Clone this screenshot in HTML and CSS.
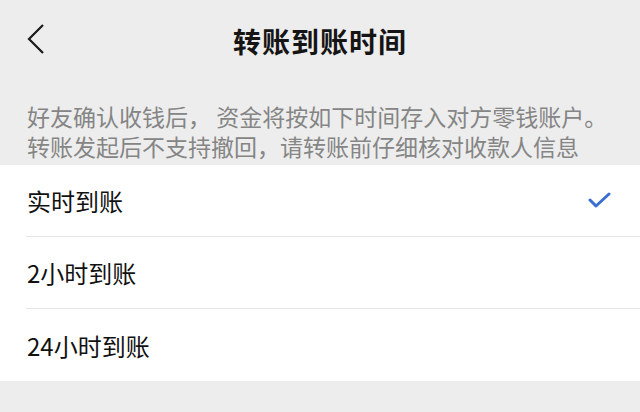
FILE: index.html
```html
<!DOCTYPE html>
<html lang="zh-CN">
<head>
  <meta charset="UTF-8" />
  <meta name="viewport" content="width=device-width, initial-scale=1.0"/>
  <title>转账到账时间</title>
  <link rel="stylesheet" href="styles.css">
</head>
<body>
  <header class="top-bar">
    <a href="#" class="back" aria-label="返回">
      <svg width="20" height="32" viewBox="0 0 20 32">
        <polyline points="17,2 3,16 17,30" fill="none" stroke="#1a1a1a" stroke-width="2.2"/>
      </svg>
    </a>
    <h1>转账到账时间</h1>
  </header>

  <div class="notice">
    <p>好友确认收钱后， 资金将按如下时间存入对方零钱账户。</p>
    <p>转账发起后不支持撤回，请转账前仔细核对收款人信息</p>
  </div>

  <ul class="options">
    <li class="option selected">
      <span>实时到账</span>
      <svg class="check" width="24" height="18" viewBox="0 0 24 18">
        <polyline points="2,8 8,14 21,2" fill="none" stroke="#3a6fd1" stroke-width="3" stroke-linecap="round" stroke-linejoin="round"/>
      </svg>
    </li>
    <li class="option"><span>2小时到账</span></li>
    <li class="option"><span>24小时到账</span></li>
  </ul>
</body>
</html>
```

FILE: styles.css
```css
body {
  margin: 0;
  background: #ededed;
  font-family: "Noto Sans CJK SC", "Noto Sans", sans-serif;
  color: #111;
}

.top-bar {
  height: 82px;
  display: flex;
  align-items: center;
  justify-content: center;
  position: relative;
}

.top-bar .back {
  position: absolute;
  left: 26px;
  top: 23px;
  display: block;
  line-height: 0;
}

.top-bar h1 {
  margin: 0;
  font-size: 28px;
  font-weight: 700;
  letter-spacing: 1px;
  color: #151515;
}

.notice {
  padding: 19px 0 4px 27px;
  font-size: 23px;
  line-height: 30px;
  color: #858585;
  white-space: nowrap;
}

.notice p {
  margin: 0;
}

.options {
  list-style: none;
  margin: 0;
  padding: 0;
  background: #fff;
}

.option {
  height: 71px;
  margin-left: 26px;
  padding-right: 28px;
  display: flex;
  align-items: center;
  justify-content: space-between;
  font-size: 24px;
  border-bottom: 1px solid #e6e6e6;
}

.option:last-child {
  border-bottom: none;
  height: 72px;
}

.option span {
  margin-left: 1px;
}

.check {
  display: block;
}
```
